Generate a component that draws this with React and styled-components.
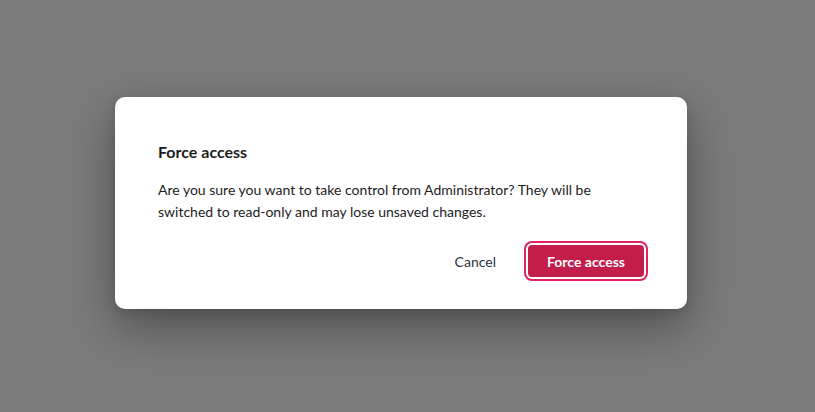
import React from "react";
import styled, { createGlobalStyle } from "styled-components";

const Global = createGlobalStyle`
  html, body { margin: 0; padding: 0; height: 100%; }
  body { font-family: Lato, "Liberation Sans", sans-serif; }
  #root { height: 100%; }
`;

const Overlay = styled.div`
  width: 815px;
  height: 412px;
  background: #7b7b7b;
  display: flex;
  align-items: center;
  justify-content: center;
  padding: 0 13px 6px 0;
  box-sizing: border-box;
`;

const Dialog = styled.div`
  width: 572px;
  box-sizing: border-box;
  background: #ffffff;
  border-radius: 10px;
  padding: 44px 43px 32px;
  box-shadow: 0 18px 48px rgba(0, 0, 0, 0.35), 0 4px 12px rgba(0, 0, 0, 0.12);
  display: flex;
  flex-direction: column;
`;

const Title = styled.h2`
  margin: 0;
  font-size: 16px;
  line-height: 22px;
  font-weight: 700;
  color: #1d1c1d;
`;

const Body = styled.p`
  margin: 16px 0 0;
  font-size: 14px;
  line-height: 22px;
  color: #1d1c1d;
`;

const Actions = styled.div`
  margin-top: 22px;
  display: flex;
  justify-content: flex-end;
  align-items: center;
  gap: 32px;
`;

const Button = styled.button`
  font-family: Lato, "Liberation Sans", sans-serif;
  font-size: 14px;
  height: 32px;
  padding: 0 ${(p) => (p.$primary ? "19px" : "0")};
  border: none;
  border-radius: 4px;
  cursor: pointer;
  font-weight: ${(p) => (p.$primary ? 700 : 400)};
  background: ${(p) => (p.$primary ? "#c21d4b" : "transparent")};
  color: ${(p) => (p.$primary ? "#ffffff" : "#2c3144")};
  box-shadow: ${(p) =>
    p.$primary ? "0 0 0 2px #ffffff, 0 0 0 4px #e0245e" : "none"};
`;

export default function App() {
  return (
    <>
      <Global />
      <Overlay>
        <Dialog role="dialog">
          <Title>Force access</Title>
          <Body>
            Are you sure you want to take control from Administrator? They will be
            switched to read-only and may lose unsaved changes.
          </Body>
          <Actions>
            <Button>Cancel</Button>
            <Button $primary>Force access</Button>
          </Actions>
        </Dialog>
      </Overlay>
    </>
  );
}
